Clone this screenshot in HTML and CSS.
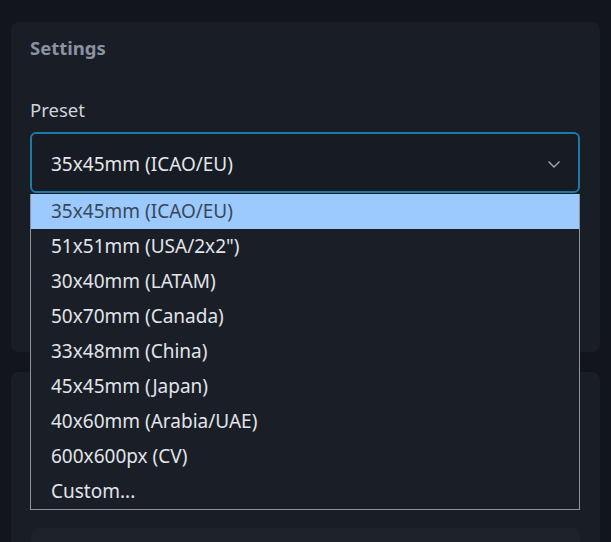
FILE: index.html
```html
<!DOCTYPE html>
<html lang="en">
<head>
  <meta charset="UTF-8" />
  <meta name="viewport" content="width=device-width, initial-scale=1.0"/>
  <title>Settings</title>
  <link rel="stylesheet" href="styles.css">
</head>
<body>
  <div class="page">
    <section class="card">
      <h2 class="card-title">Settings</h2>
      <div class="field">
        <label class="field-label">Preset</label>
        <div class="select-wrap">
          <div class="select open">
            <span class="select-value">35x45mm (ICAO/EU)</span>
            <svg class="chevron" width="14" height="9" viewBox="0 0 14 9">
              <path d="M1.5 1.5 L7 7 L12.5 1.5" fill="none" stroke="#a4a9b3" stroke-width="1.4"/>
            </svg>
          </div>
          <ul class="select-menu">
            <li class="option active">35x45mm (ICAO/EU)</li>
            <li class="option">51x51mm (USA/2x2")</li>
            <li class="option">30x40mm (LATAM)</li>
            <li class="option">50x70mm (Canada)</li>
            <li class="option">33x48mm (China)</li>
            <li class="option">45x45mm (Japan)</li>
            <li class="option">40x60mm (Arabia/UAE)</li>
            <li class="option">600x600px (CV)</li>
            <li class="option">Custom...</li>
          </ul>
        </div>
      </div>
    </section>

    <section class="card">
      <div class="input-stub"></div>
    </section>
  </div>
</body>
</html>
```

FILE: styles.css
```css
body {
  margin: 0;
  background: #12151c;
  font-family: 'Noto Sans', 'Open Sans', sans-serif;
  color: #dfe2e7;
  overflow: hidden;
}
.page {
  padding: 22px 11px 0 11px;
  display: flex;
  flex-direction: column;
  gap: 20px;
}
.card {
  background: #191d26;
  border-radius: 8px;
  padding: 14px 19px 0 19px;
}
.card:first-child {
  height: 316px;
}
.card:last-child {
  height: 200px;
  padding-top: 156px;
}
.card-title {
  margin: 0;
  font-size: 18.5px;
  line-height: 24px;
  font-weight: 700;
  color: #8b92a1;
}
.field {
  margin-top: 37px;
}
.field-label {
  display: block;
  font-size: 18.5px;
  line-height: 26px;
  color: #cfd3da;
  margin-bottom: 9px;
}
.select-wrap {
  position: relative;
  width: 550px;
}
.select {
  height: 57px;
  border: 2px solid #1d7ba3;
  border-radius: 6px;
  background: #171b23;
  display: flex;
  align-items: center;
  justify-content: space-between;
  padding: 0 19px;
}
.select-value {
  font-size: 19px;
  line-height: 26px;
  padding-top: 3px;
  color: #e3e6ea;
}
.chevron {
  margin-right: -2px;
  margin-top: 4px;
}
.select-menu {
  position: absolute;
  top: 62px;
  left: 0;
  right: 0;
  margin: 0;
  padding: 0;
  list-style: none;
  background: #1a1e27;
  border: 1px solid #8d929c;
  border-top: none;
  z-index: 5;
}
.option {
  height: 35px;
  line-height: 35px;
  padding-left: 20px;
  font-size: 19px;
  color: #e1e4e9;
}
.option.active {
  background: #9ccaff;
  color: #394858;
}
.input-stub {
  height: 40px;
  width: 549px;
  margin-left: 1px;
  background: #1c212a;
  border-radius: 6px 6px 0 0;
}
```
